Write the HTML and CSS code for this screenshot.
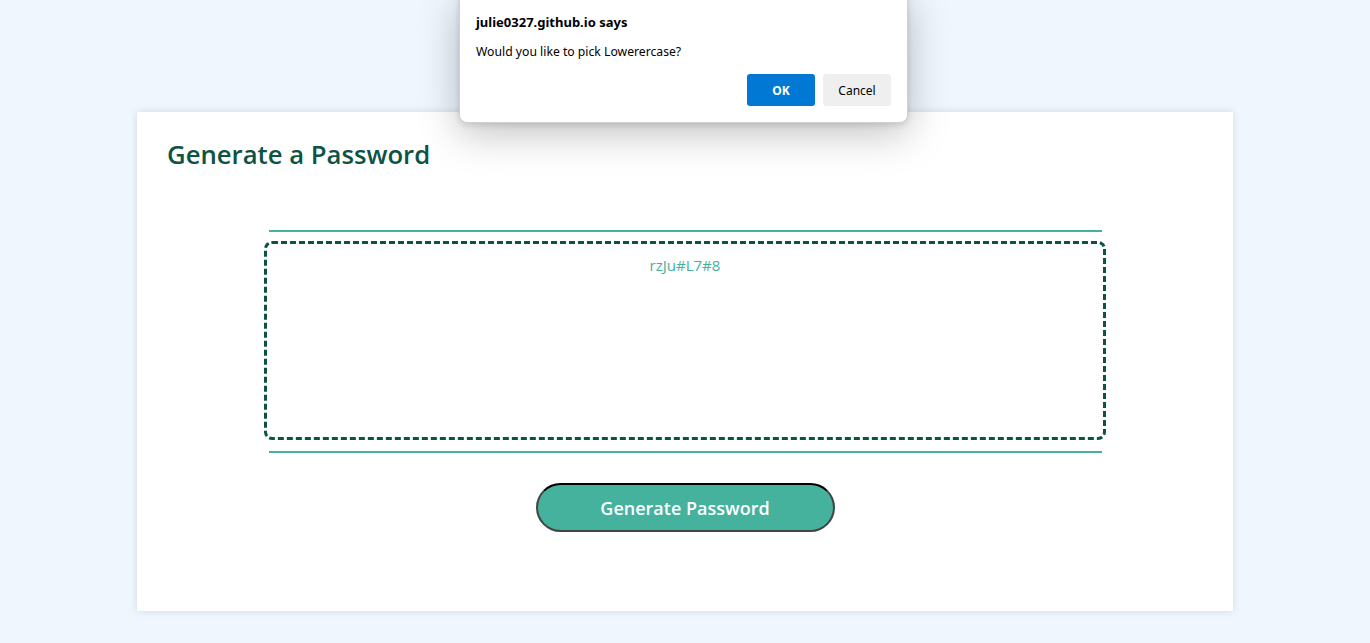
FILE: index.html
```html
<!DOCTYPE html>
<html lang="en">
<head>
<meta charset="utf-8">
<title>Password Generator</title>
<link rel="stylesheet" href="styles.css">
</head>
<body>
<main class="card">
  <h2 class="card-title">Generate a Password</h2>
  <section class="card-body">
    <div class="rule"></div>
    <div class="password-box"><span class="password-text">rzJu#L7#8</span></div>
    <div class="rule"></div>
  </section>
  <div class="card-footer">
    <button class="btn">Generate Password</button>
  </div>
</main>
<div class="dialog">
  <div class="dialog-title">julie0327.github.io says</div>
  <div class="dialog-msg">Would you like to pick Lowerercase?</div>
  <div class="dialog-actions">
    <button class="dbtn dbtn-ok">OK</button>
    <button class="dbtn dbtn-cancel">Cancel</button>
  </div>
</div>
</body>
</html>
```
FILE: styles.css
```css
* { box-sizing: border-box; }
html, body { margin: 0; height: 100%; }
body {
  background: #eff6fe;
  font-family: "Open Sans", "DejaVu Sans", sans-serif;
  padding-top: 112px;
}
.card {
  width: 1096px;
  height: 499px;
  margin: 0 auto;
  background: #fff;
  box-shadow: 0 0 8px rgba(0,0,0,0.12);
  padding: 27px 30px 0 30px;
  display: flex;
  flex-direction: column;
  align-items: center;
}
.card-title {
  align-self: flex-start;
  margin: 0;
  font-size: 25.7px;
  line-height: 32px;
  font-weight: 600;
  color: #0d5345;
}
.card-body {
  margin-top: 59px;
  display: flex;
  flex-direction: column;
  align-items: center;
}
.rule {
  width: 833px;
  height: 2px;
  background: #45b29d;
}
.password-box {
  width: 842px;
  height: 199px;
  margin: 9px 0 11px;
  border: 3px dashed #0d5345;
  border-radius: 8px;
  text-align: center;
  padding-top: 10px;
}
.password-text {
  font-size: 15px;
  color: #45b29d;
}
.card-footer {
  margin-top: 30px;
}
.btn {
  width: 299px;
  height: 49px;
  border-radius: 25px;
  background: #45b29d;
  border: 2px solid #444;
  border-top-color: #000;
  color: #fff;
  font-family: "Open Sans", "DejaVu Sans", sans-serif;
  font-size: 18px;
  font-weight: 600;
  padding-top: 1px;
}
.dialog {
  position: absolute;
  left: 459px;
  top: -8px;
  width: 449px;
  height: 131px;
  background: #fff;
  border-radius: 8px;
  border: 1px solid #d0d0d0;
  box-shadow: 0 10px 40px rgba(0,0,0,0.25), 0 2px 6px rgba(0,0,0,0.12);
  padding: 20px 16px 0 16px;
  font-family: "Noto Sans", "Liberation Sans", sans-serif;
  color: #000;
}
.dialog-title {
  font-size: 13px;
  font-weight: 700;
  line-height: 18px;
}
.dialog-msg {
  margin-top: 12px;
  font-size: 12.2px;
  line-height: 18px;
}
.dialog-actions {
  margin-top: 13px;
  display: flex;
  justify-content: flex-end;
  gap: 8px;
}
.dbtn {
  width: 68px;
  height: 32px;
  border: none;
  border-radius: 3px;
  font-family: "Noto Sans", "Liberation Sans", sans-serif;
  font-size: 12px;
}
.dbtn-ok { background: #0078d4; color: #fff; font-weight: 700; }
.dbtn-cancel { background: #efefef; color: #000; }
```
